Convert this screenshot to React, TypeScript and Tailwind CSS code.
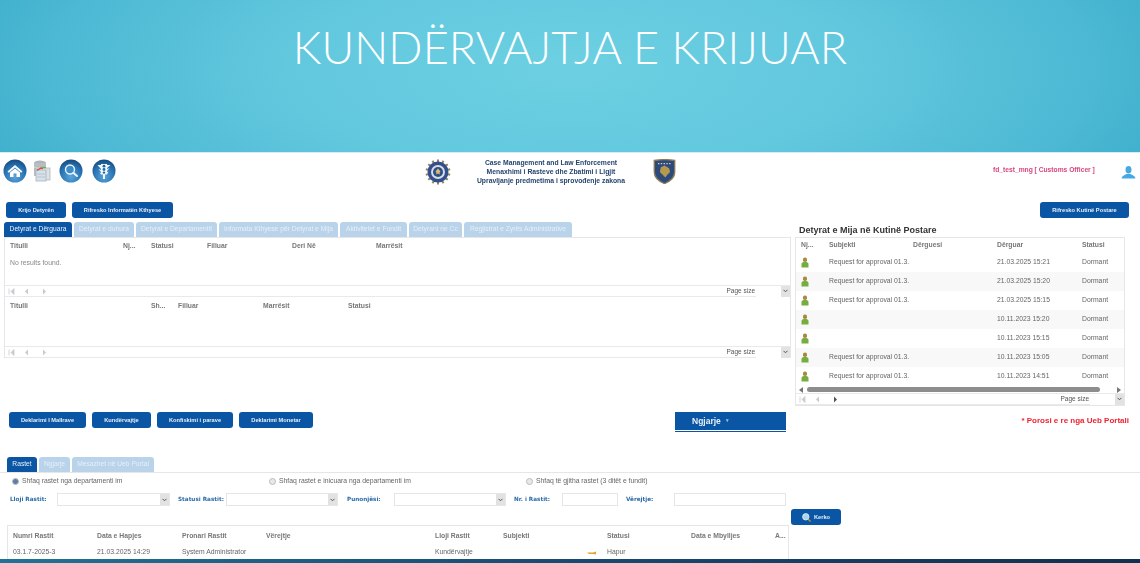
import React from "react";

const arial = "font-['Liberation_Sans',Arial,sans-serif]";

function RoundIcon({ children }: { children: React.ReactNode }) {
  return (
    <svg width="24" height="24" viewBox="0 0 24 24">
      <defs>
        <radialGradient id="ball" cx="50%" cy="75%" r="75%">
          <stop offset="0%" stopColor="#5aa5da" />
          <stop offset="65%" stopColor="#2570b0" />
          <stop offset="100%" stopColor="#174a7c" />
        </radialGradient>
      </defs>
      <circle cx="12" cy="12" r="11.5" fill="url(#ball)" />
      {children}
    </svg>
  );
}

function HomeIcon() {
  return (
    <RoundIcon>
      <path d="M4.5 12.5 12 6l7.5 6.5-1.300 1.200L12 8.500l-6.200 5.200z" fill="#fff" />
      <path d="M7 13.5 12 9.500l5 4V18h-3.500v-3.500h-3V18H7z" fill="#fff" />
    </RoundIcon>
  );
}

function SearchIcon() {
  return (
    <RoundIcon>
      <circle cx="11" cy="10.5" r="4.5" fill="#3d8cc8" stroke="#e8f4fb" strokeWidth="1.4" />
      <path d="m14.5 14 3.500 3" stroke="#e8f4fb" strokeWidth="2" strokeLinecap="round" />
    </RoundIcon>
  );
}

function LightIcon() {
  return (
    <RoundIcon>
      <path d="M5.5 6H9V5h6v1h3.500l-3.500 3v1l2.500-1-2.500 3v1l1.500-.5L15 15.500H13V20h-2v-4.500H9L7.500 13.500 9 14v-1l-2.500-3L9 11v-1z" fill="#f2f8fc" />
      <circle cx="12" cy="7.2" r="1.4" fill="#1d68a6" />
      <circle cx="12" cy="10.5" r="1.4" fill="#1d68a6" />
      <circle cx="12" cy="13.6" r="1.2" fill="#1d68a6" />
    </RoundIcon>
  );
}

function StackIcon() {
  return (
    <svg width="18" height="22" viewBox="0 0 18 22">
      <ellipse cx="7" cy="3" rx="6" ry="2.5" fill="#aeb6bc" />
      <rect x="1" y="3" width="12" height="13" fill="#b6bec4" />
      <path d="M1 7c2 1.500 10 1.500 12 0" stroke="#d2d8dc" fill="none" />
      <rect x="7" y="8" width="10" height="12" fill="#dde2e6" stroke="#b0b8be" strokeWidth="0.8" />
      <rect x="3" y="10" width="10" height="11" fill="#d5e2ec" stroke="#a8b4bc" strokeWidth="0.8" />
      <path d="M4 14h8M4 17h8" stroke="#b8c4cc" />
      <path d="M4 10.500 8 8l2 .5" stroke="#d8503c" strokeWidth="1.300" fill="none" />
      <path d="M9 7.500h4" stroke="#6fb04c" strokeWidth="1.300" />
    </svg>
  );
}

function CustomsEmblem() {
  const teeth = Array.from({ length: 14 }, (_, i) => (i * 360) / 14);
  return (
    <svg width="26" height="26" viewBox="0 0 26 26">
      {teeth.map((a) => (
        <rect key={a} x="12" y="0.500" width="2" height="4" fill="#8f8565" transform={`rotate(${a} 13 13)`} />
      ))}
      <circle cx="13" cy="13" r="10.5" fill="#34508c" />
      <circle cx="13" cy="13" r="7" fill="#d9dde4" />
      <circle cx="13" cy="13" r="5" fill="#2f4e8c" />
      <path d="M13 9.500l2.500 3-1 1 .5 2-2-1-2 1 .5-2-1-1z" fill="#d8c06a" />
    </svg>
  );
}

function KosovoShield() {
  return (
    <svg width="23" height="25" viewBox="0 0 24 27">
      <path d="M1 1.500C8 .5 16 .5 23 1.500V14c0 6-5 10-11 12.500C6 24 1 20 1 14z" fill="#2c4a7c" stroke="#8b7b55" strokeWidth="1.500" />
      <path d="M8 9l4-2 5 3 1 4-3 3-2 3-3-3-3-3z" fill="#b59a4e" />
      <path d="M5 5h14" stroke="#d8d2bd" strokeWidth="1.300" strokeDasharray="1.500 1.500" />
    </svg>
  );
}

function BlueUser() {
  return (
    <svg width="15" height="13" viewBox="0 0 16 14">
      <ellipse cx="8" cy="4" rx="3.200" ry="4" fill="#46a9e6" />
      <path d="M0.500 13.500c.5-3 3-4 5.500-5h4c2.500 1 5 2 5.500 5z" fill="#46a9e6" />
    </svg>
  );
}

function TaskUser() {
  return (
    <svg width="8" height="11" viewBox="0 0 8 11">
      <rect x="2" y="0.500" width="4" height="4.500" rx="1.800" fill="#a98a3c" />
      <path d="M0.500 10.500V7c0-1.500 1.500-2 3.500-2s3.500.5 3.500 2v3.500z" fill="#76ad3f" />
    </svg>
  );
}

function BlueButton({ label, className }: { label: string; className: string }) {
  return (
    <button
      className={`h-4 rounded-[3px] bg-[#0b56a4] text-center text-[5.7px] font-bold text-[#e4eef8] ${arial} ${className}`}
    >
      {label}
    </button>
  );
}

function SelectBox({ className }: { className: string }) {
  return (
    <div className={`flex items-stretch justify-end border border-[#e6e6e6] bg-white ${className}`}>
      <div className="flex w-[9px] items-center justify-center bg-[#e2e2e2]">
        <svg width="5" height="4" viewBox="0 0 5 4">
          <path d="m.5.800 2 2 2-2" fill="none" stroke="#555" strokeWidth="1" />
        </svg>
      </div>
    </div>
  );
}

function Pager({ active }: { active?: boolean }) {
  return (
    <div className="flex h-3 items-center border-y border-[#e9e9e9] bg-white">
      <svg className="ml-[3px]" width="40" height="7" viewBox="0 0 40 7">
        <path d="M1 0.500v6M6 0.500v6L3 3.500z" stroke="#c8ccd0" fill="#c8ccd0" strokeWidth="0.800" />
        <path d="M20 0.500v6l-3-3z" fill="#c8ccd0" />
        <path d="M35 0.500v6l3-3z" fill={active ? "#555" : "#c8ccd0"} />
      </svg>
      <span className={`ml-auto mr-[1px] text-[6.5px] text-[#555] ${arial}`}>Page size</span>
      <SelectBox className="h-[11px] w-[34px] border-0" />
    </div>
  );
}

const mainTabs = [
  { label: "Detyrat e Dërguara", width: "w-[68px]", active: true },
  { label: "Detyrat e duhura", width: "w-[60px]" },
  { label: "Detyrat e Departamentit", width: "w-[81px]" },
  { label: "Informata Kthyese për Detyrat e Mija", width: "w-[119px]" },
  { label: "Aktivitetet e Fundit", width: "w-[67px]" },
  { label: "Detyrant ne Cc", width: "w-[53px]" },
  { label: "Regjistrat e Zyrës Administrative", width: "w-[108px]" },
];

const caseTabs = [
  { label: "Rastet", width: "w-[30px]", active: true },
  { label: "Ngjarje", width: "w-[31px]" },
  { label: "Mesazhet në Ueb Portal", width: "w-[82px]" },
];

function Tabs({ tabs }: { tabs: { label: string; width: string; active?: boolean }[] }) {
  return (
    <div className="flex h-[15px] gap-[2px]">
      {tabs.map((tab) => (
        <div
          key={tab.label}
          className={`flex items-center justify-center whitespace-nowrap rounded-t-[3px] text-[6.7px] ${arial} ${tab.width} ${
            tab.active ? "bg-[#0b56a4] text-[#e8f0f8]" : "bg-[#b9d3ea] text-[#e6eff7]"
          }`}
        >
          {tab.label}
        </div>
      ))}
    </div>
  );
}

const mailRows = [
  { subject: "Request for approval 01.3.", date: "21.03.2025 15:21" },
  { subject: "Request for approval 01.3.", date: "21.03.2025 15:20" },
  { subject: "Request for approval 01.3.", date: "21.03.2025 15:15" },
  { subject: "", date: "10.11.2023 15:20" },
  { subject: "", date: "10.11.2023 15:15" },
  { subject: "Request for approval 01.3.", date: "10.11.2023 15:05" },
  { subject: "Request for approval 01.3.", date: "10.11.2023 14:51" },
];

const filterLabel = "whitespace-nowrap font-['DejaVu_Sans',sans-serif] text-[5.7px] font-bold text-[#2a6aa8]";

export default function App() {
  return (
    <div className={`relative h-[563px] w-[1140px] overflow-hidden bg-white ${arial}`}>
      {/* slide title band */}
      <div className="flex h-[152px] justify-center bg-[radial-gradient(ellipse_620px_230px_at_570px_70px,#6dd0e2_0%,#62c8de_45%,#4cb8d3_85%,#3fb0cc_100%)] pt-[20px]">
        <h1 className="h-fit font-['Lato',sans-serif] text-[45px] font-light leading-[54px] tracking-[0.1px] text-white">
          KUNDËRVAJTJA E KRIJUAR
        </h1>
      </div>

      <div className="blur-[0.4px]">
        {/* app header */}
        <div className="flex h-[50px] items-start border-t border-[#d8eef3] pt-[6px]">
          <div className="flex w-[425px] items-center pl-[3px]">
            <HomeIcon />
            <div className="ml-[6px] mr-2 flex"><StackIcon /></div>
            <SearchIcon />
            <div className="ml-[9px] flex"><LightIcon /></div>
          </div>
          <div className="w-[27px]"><CustomsEmblem /></div>
          <div className="-mt-[1px] w-[198px] text-center text-[6.8px] font-bold leading-[9px] text-[#25456f]">
            <div>Case Management and Law Enforcement</div>
            <div>Menaxhimi i Rasteve dhe Zbatimi i Ligjit</div>
            <div>Upravljanje predmetima i sprovođenje zakona</div>
          </div>
          <div className="ml-[3px]"><KosovoShield /></div>
          <div className="ml-[317px] mt-[6px] w-[110px] whitespace-nowrap text-[6.7px] font-bold text-[#d8467e]">
            fd_test_mng [ Customs Officer ]
          </div>
          <div className="ml-[18px] mt-[7px]"><BlueUser /></div>
        </div>

        {/* main area */}
        <div className="flex">
          <div className="w-[791px] pl-[4px]">
            <div className="flex gap-[6px] pl-[2px]">
              <BlueButton label="Krijo Detyrën" className="w-[60px]" />
              <BlueButton label="Rifresko Informatën Kthyese" className="w-[101px]" />
            </div>
            <div className="mt-[4px]"><Tabs tabs={mainTabs} /></div>

            <div className="border-x border-t border-[#e6e6e6] text-[6.8px]">
              <div className="h-[47px]">
                <div className="grid grid-cols-[113px_28px_56px_85px_84px_1fr] pl-[5px] pt-[3px] font-bold text-[#777]">
                  <span>Titulli</span><span>Nj...</span><span>Statusi</span>
                  <span>Filluar</span><span>Deri Në</span><span>Marrësit</span>
                </div>
                <div className="pl-[5px] pt-[7px] text-[#888]">No results found.</div>
              </div>
              <Pager />
              <div className="h-[49px]">
                <div className="grid grid-cols-[141px_27px_85px_85px_1fr] pl-[5px] pt-[4px] font-bold text-[#777]">
                  <span>Titulli</span><span>Sh...</span><span>Filluar</span><span>Marrësit</span><span>Statusi</span>
                </div>
              </div>
              <Pager />
            </div>

            <div className="mt-[54px] flex items-start pr-[5px]">
              <div className="flex gap-[6px] pl-[5px]">
                <BlueButton label="Deklarimi I Mallrave" className="w-[77px]" />
                <BlueButton label="Kundërvajtje" className="w-[59px]" />
                <BlueButton label="Konfiskimi i parave" className="w-[76px]" />
                <BlueButton label="Deklarimi Monetar" className="w-[74px]" />
              </div>
              <div className="ml-auto flex h-[19px] w-[111px] items-center border-b border-white bg-[#0b56a4] pl-[17px] text-[8.5px] font-bold text-[#e4eef8] shadow-[0_1px_0_#0b56a4]">
                Ngjarje <span className="ml-[5px] text-[5px] text-[#9dc0e2]">▾</span>
              </div>
            </div>
          </div>

          <div className="flex-1 pl-[4px]">
            <div className="flex justify-end pr-[11px]">
              <BlueButton label="Rifresko Kutinë Postare" className="w-[89px]" />
            </div>
            <div className="mt-[6px] pl-[4px] text-[9px] font-bold leading-[13px] text-[#333]">
              Detyrat e Mija në Kutinë Postare
            </div>
            <div className="w-[330px] border border-[#e6e6e6] text-[6.8px] text-[#666]">
              <div className="grid h-[15px] grid-cols-[28px_84px_84px_85px_1fr] items-center pl-[5px] font-bold text-[#777]">
                <span>Nj...</span><span>Subjekti</span><span>Dërguesi</span><span>Dërguar</span><span>Statusi</span>
              </div>
              {mailRows.map((row, i) => (
                <div
                  key={row.date}
                  className={`grid h-[19px] grid-cols-[28px_168px_85px_1fr] items-center pl-[5px] ${i % 2 === 1 ? "bg-[#f8f8f8]" : "bg-white"}`}
                >
                  <TaskUser />
                  <span className="whitespace-nowrap">{row.subject}</span>
                  <span>{row.date}</span>
                  <span>Dormant</span>
                </div>
              ))}
              <div className="flex h-[7px] items-center gap-[3px] px-[3px]">
                <span className="h-0 w-0 border-y-[3px] border-r-[4px] border-y-transparent border-r-[#777]" />
                <div className="mx-[1px] h-[5px] w-[293px] rounded-full bg-[#8d8d8d]" />
                <span className="ml-auto h-0 w-0 border-y-[3px] border-l-[4px] border-y-transparent border-l-[#777]" />
              </div>
              <Pager active />
            </div>
            <div className="mt-[9px] pr-[11px] text-right text-[8px] font-bold leading-3 text-[#ee2230]">
              * Porosi e re nga Ueb Portali
            </div>
          </div>
        </div>

        {/* cases */}
        <div className="mt-[26px] pl-[7px]">
          <Tabs tabs={caseTabs} />
        </div>
        <div className="border-t border-[#e6e6e6] text-[6.8px] text-[#666]">
          <div className="flex h-[17px] items-center pl-[12px]">
            <div className="flex w-[257px] items-center gap-[3px]">
              <span className="h-[7px] w-[7px] rounded-full border border-[#bbb] bg-[#5c7fa8]" />
              <span>Shfaq rastet nga departamenti im</span>
            </div>
            <div className="flex w-[257px] items-center gap-[3px]">
              <span className="h-[7px] w-[7px] rounded-full border border-[#bbb] bg-[#e8e8e8]" />
              <span>Shfaq rastet e inicuara nga departamenti im</span>
            </div>
            <div className="flex items-center gap-[3px]">
              <span className="h-[7px] w-[7px] rounded-full border border-[#bbb] bg-[#e8e8e8]" />
              <span>Shfaq të gjitha rastet (3 ditët e fundit)</span>
            </div>
          </div>
          <div className="mt-[3px] flex h-[13px] items-center pl-[10px]">
            <span className={`${filterLabel} w-[47px]`}>Lloji Rastit:</span>
            <SelectBox className="h-[13px] w-[113px]" />
            <span className={`${filterLabel} ml-[8px] w-[48px]`}>Statusi Rastit:</span>
            <SelectBox className="h-[13px] w-[112px]" />
            <span className={`${filterLabel} ml-[9px] w-[47px]`}>Punonjësi:</span>
            <SelectBox className="h-[13px] w-[112px]" />
            <span className={`${filterLabel} ml-[8px] w-[48px]`}>Nr. i Rastit:</span>
            <div className="h-[13px] w-[56px] border border-[#e6e6e6]" />
            <span className={`${filterLabel} ml-[8px] w-[48px]`}>Vërejtje:</span>
            <div className="h-[13px] w-[112px] border border-[#e6e6e6]" />
          </div>
          <div className="mt-[3px] flex h-[16px] pl-[791px]">
            <button className="flex h-4 w-[50px] items-center justify-center gap-[3px] rounded-[3px] bg-[#0b56a4] text-[5.7px] font-bold text-[#e4eef8]">
              <svg width="9" height="9" viewBox="0 0 9 9">
                <circle cx="3.8" cy="3.8" r="3.2" fill="#a9d3ee" stroke="#e4f1fa" strokeWidth="0.8" />
                <path d="m6 6 2.500 2.500" stroke="#c79a3d" strokeWidth="1.300" />
              </svg>
              Kerko
            </button>
          </div>
          <div className="ml-[7px] h-[34px] w-[782px] overflow-hidden border border-b-0 border-[#e6e6e6]">
            <div className="grid h-[15px] grid-cols-[84px_85px_84px_169px_68px_104px_84px_84px_1fr] items-end pl-[5px] font-bold text-[#777]">
              <span>Numri Rastit</span><span>Data e Hapjes</span><span>Pronari Rastit</span><span>Vërejtje</span>
              <span>Lloji Rastit</span><span>Subjekti</span><span>Statusi</span><span>Data e Mbylljes</span><span>A...</span>
            </div>
            <div className="grid h-[23px] grid-cols-[84px_85px_84px_169px_68px_84px_20px_84px_1fr] items-center pl-[5px]">
              <span>03.1.7-2025-3</span><span>21.03.2025 14:29</span><span>System Administrator</span><span />
              <span>Kundërvajtje</span>
              <span />
              <svg width="10" height="4" viewBox="0 0 10 4"><path d="M0 1.500h6l3-1v3L6 3H2z" fill="#e2a52f" /></svg>
              <span>Hapur</span>
            </div>
          </div>
        </div>
      </div>

      {/* next slide edge */}
      <div className="absolute inset-x-0 bottom-0 h-[4px] bg-[linear-gradient(90deg,#1f7396,#174a70_50%,#10304f)]" />
    </div>
  );
}
